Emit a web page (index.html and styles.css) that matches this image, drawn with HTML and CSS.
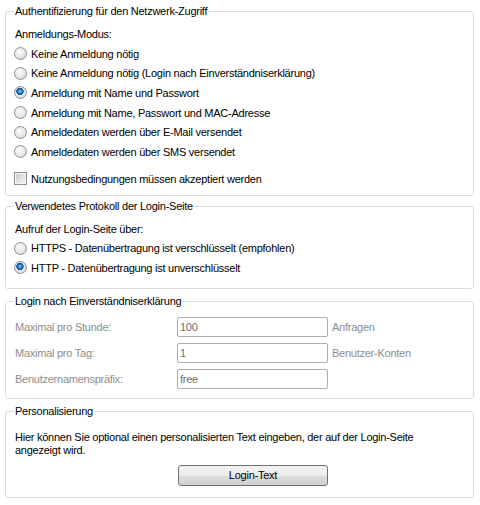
FILE: index.html
```html
<!DOCTYPE html>
<html lang="de">
<head>
  <meta charset="UTF-8">
  <meta name="viewport" content="width=device-width, initial-scale=1.0">
  <title>Public Spot - Anmeldung</title>
  <link rel="stylesheet" href="styles.css">
</head>
<body>
  <fieldset class="group group-auth">
    <legend>Authentifizierung für den Netzwerk-Zugriff</legend>
    <div class="caption">Anmeldungs-Modus:</div>
    <label class="opt"><input type="radio" name="modus" class="radio"> Keine Anmeldung nötig</label>
    <label class="opt"><input type="radio" name="modus" class="radio"> Keine Anmeldung nötig (Login nach Einverständniserklärung)</label>
    <label class="opt"><input type="radio" name="modus" class="radio" checked> Anmeldung mit Name und Passwort</label>
    <label class="opt"><input type="radio" name="modus" class="radio"> Anmeldung mit Name, Passwort und MAC-Adresse</label>
    <label class="opt"><input type="radio" name="modus" class="radio"> Anmeldedaten werden über E-Mail versendet</label>
    <label class="opt"><input type="radio" name="modus" class="radio"> Anmeldedaten werden über SMS versendet</label>
    <label class="opt opt-check"><input type="checkbox" class="check"> Nutzungsbedingungen müssen akzeptiert werden</label>
  </fieldset>

  <fieldset class="group group-proto">
    <legend>Verwendetes Protokoll der Login-Seite</legend>
    <div class="caption">Aufruf der Login-Seite über:</div>
    <label class="opt"><input type="radio" name="proto" class="radio"> HTTPS - Datenübertragung ist verschlüsselt (empfohlen)</label>
    <label class="opt"><input type="radio" name="proto" class="radio" checked> HTTP - Datenübertragung ist unverschlüsselt</label>
  </fieldset>

  <fieldset class="group group-login">
    <legend>Login nach Einverständniserklärung</legend>
    <div class="form-grid">
      <label class="muted" for="pro_stunde">Maximal pro Stunde:</label>
      <input type="text" id="pro_stunde" class="field" value="100" disabled>
      <span class="muted">Anfragen</span>

      <label class="muted" for="pro_tag">Maximal pro Tag:</label>
      <input type="text" id="pro_tag" class="field" value="1" disabled>
      <span class="muted">Benutzer-Konten</span>

      <label class="muted" for="praefix">Benutzernamenspräfix:</label>
      <input type="text" id="praefix" class="field" value="free" disabled>
      <span></span>
    </div>
  </fieldset>

  <fieldset class="group group-text">
    <legend>Personalisierung</legend>
    <p class="hint">Hier können Sie optional einen personalisierten Text eingeben, der auf der Login-Seite angezeigt wird.</p>
    <button type="button" class="btn">Login-Text</button>
  </fieldset>
</body>
</html>
```

FILE: styles.css
```css
body { margin: 0; padding: 5px 6px 0 5px; background: #fff; color: #000; font-family: "Liberation Sans", Arial, sans-serif; font-size: 11px; letter-spacing: -0.25px; }

.group { margin: 0 0 6px; padding: 6px 8px 6px; border: 1px solid #d5dfe5; border-radius: 3px; min-width: 0; }
.group legend { padding: 0 1px; line-height: 13px; }
.group-auth { margin-bottom: 4px; }
.group-proto { padding-bottom: 10px; }
.group-login { padding-top: 9px; padding-bottom: 9px; }
.group-text { padding-top: 13px; padding-bottom: 11px; }

.caption { height: 20px; display: flex; align-items: center; padding-left: 1px; }
.opt { height: 19.6px; display: flex; align-items: center; }
.opt-check { height: 20px; margin-top: 7px; }

.radio { appearance: none; width: 13px; height: 13px; margin: 0 4px 0 0; border: 1px solid #8f9194; border-radius: 50%;
  background: radial-gradient(circle at 40% 35%, #fdfdfd 0, #e6e6e6 55%, #cfcfcf 100%); }
.radio:checked { background:
  radial-gradient(circle at 45% 40%, #9fe0ff 0, #2b8ad6 1.6px, #0f4f91 3.4px, rgba(15,79,145,0) 4px),
  radial-gradient(circle at 40% 35%, #fdfdfd 0, #e6e6e6 55%, #cfcfcf 100%); }

.check { appearance: none; width: 13px; height: 13px; margin: 0 4px 0 0; border: 1px solid #8e8f8f; box-shadow: inset 0 0 0 1px #f4f4f4;
  background: linear-gradient(135deg, #c4c7cc 0, #e4e5e7 60%, #f4f4f4 100%); }

.form-grid { display: grid; grid-template-columns: 163px 151px auto; row-gap: 6px; column-gap: 0; align-items: center; }
.muted { color: #8d8d8d; padding-left: 1px; }
.form-grid span.muted { padding-left: 4px; }
.field { box-sizing: border-box; width: 151px; height: 20px; margin: 0; padding: 0 2px; border: 1px solid #abadb3; border-radius: 2px;
  background: #fff; color: #6d6d6d; font: inherit; letter-spacing: inherit; }

.hint { max-width: 420px; margin: 0; line-height: 13px; padding-left: 1px; }

.btn { display: block; box-sizing: border-box; width: 150px; height: 21px; margin: 8px 0 0 164px; padding: 0; border: 1px solid #707070; border-radius: 3px;
  background: linear-gradient(#f2f2f2 0, #ebebeb 50%, #dddddd 51%, #cfcfcf 100%); color: #000; font: inherit; letter-spacing: inherit; }
```
